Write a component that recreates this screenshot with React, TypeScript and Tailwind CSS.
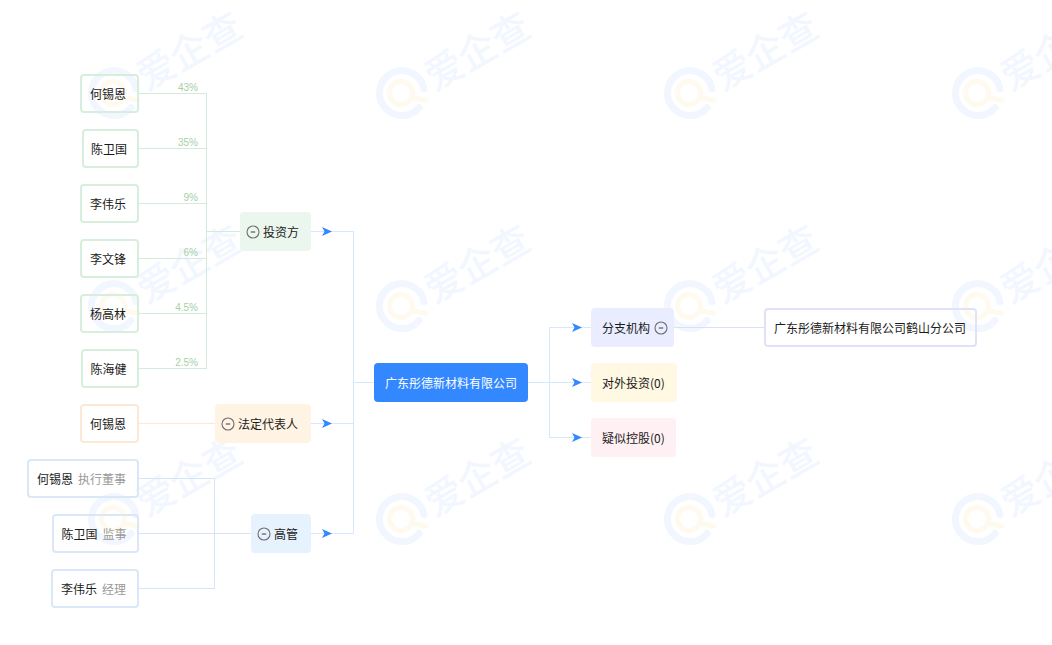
const cjk = "font-['Noto_Sans_CJK_SC','Liberation_Sans',sans-serif]";

const investors = [
  { name: "何锡恩", box: "left-[80px] top-[74px] w-[59px]" },
  { name: "陈卫国", box: "left-[82px] top-[129px] w-[57px]" },
  { name: "李伟乐", box: "left-[80px] top-[184px] w-[59px]" },
  { name: "李文锋", box: "left-[80px] top-[239px] w-[59px]" },
  { name: "杨高林", box: "left-[80px] top-[294px] w-[59px]" },
  { name: "陈海健", box: "left-[81px] top-[349px] w-[58px]" },
];

const shares = [
  { label: "43%", pos: "top-[82px]" },
  { label: "35%", pos: "top-[137px]" },
  { label: "9%", pos: "top-[192px]" },
  { label: "6%", pos: "top-[247px]" },
  { label: "4.5%", pos: "top-[302px]" },
  { label: "2.5%", pos: "top-[357px]" },
];

const managers = [
  { name: "何锡恩", role: "执行董事", box: "left-[27px] top-[459px] w-[112px]" },
  { name: "陈卫国", role: "监事", box: "left-[52px] top-[514px] w-[87px]" },
  { name: "李伟乐", role: "经理", box: "left-[51px] top-[569px] w-[88px]" },
];

function Collapse() {
  return (
    <svg width="14" height="14" viewBox="0 0 14 14" className="shrink-0">
      <circle cx="7" cy="7" r="6" fill="none" stroke="#6f6f6f" strokeWidth="1.1" />
      <path d="M4.8 7h4.4" stroke="#6f6f6f" strokeWidth="1.4" />
    </svg>
  );
}

function Watermark() {
  return (
    <div className="relative h-[213px] w-[288px]">
      <svg width="56" height="56" viewBox="0 0 56 56" className="absolute left-[86px] top-[65px]">
        <path d="M39 33l13 2" stroke="#fffaef" strokeWidth="5" strokeLinecap="round" />
        <circle cx="27" cy="28" r="11.500" fill="none" stroke="#fffaef" strokeWidth="5" />
        <path d="M50 23.700A22.500 22.500 0 1 0 45.200 42.500" fill="none" stroke="#f1f6ff" strokeWidth="7" strokeLinecap="round" />
      </svg>
      <span className="absolute left-[131px] top-[25px] -rotate-30 whitespace-nowrap text-[38px] leading-[48px] font-medium text-[#f2f7ff]">
        爱企查
      </span>
    </div>
  );
}

function Arrow({ x, y }: { x: number; y: number }) {
  return <path d={`M${x} ${y - 4.500}L${x + 10} ${y}L${x} ${y + 4.500}L${x + 2.500} ${y}Z`} fill="#3388ff" />;
}

export default function App() {
  return (
    <div className={`relative h-[645px] w-[1052px] overflow-hidden bg-white text-[12px] text-[#1a1a1a] ${cjk}`}>
      {/* watermark tiles */}
      <div className="absolute inset-0 grid grid-cols-[repeat(4,288px)] grid-rows-[repeat(3,213px)]">
        {Array.from({ length: 12 }).map((_, i) => (
          <Watermark key={i} />
        ))}
      </div>

      {/* connectors */}
      <svg width="1052" height="645" className="absolute inset-0" fill="none" shapeRendering="crispEdges">
        <path d="M139 93.500H206.500V368.500H139M139 148.500H206.500M139 203.500H206.500M139 258.500H206.500M139 313.500H206.500M206.500 231.500H241" stroke="#d3ebd9" />
        <path d="M139 423.500H216" stroke="#fbe8d6" />
        <path d="M139 478.500H214.500V588.500H139M139 533.500H252" stroke="#d5e4f6" />
        <path d="M311 231.500H353.500V533.500H311M311 423.500H353.500M353.500 382.500H375" stroke="#d6e8ff" />
        <path d="M527 382.500H592M591 327.500H549.500V437.500H592" stroke="#d6e8ff" />
        <path d="M673 327.500H765" stroke="#dcdff5" />
      </svg>
      <svg width="1052" height="645" className="absolute inset-0">
        <Arrow x={322} y={231.500} />
        <Arrow x={322} y={423.500} />
        <Arrow x={322} y={533.500} />
        <Arrow x={572} y={327.500} />
        <Arrow x={572} y={382.500} />
        <Arrow x={572} y={437.500} />
      </svg>

      {/* investors */}
      {investors.map((p) => (
        <div key={p.box} className={`absolute flex h-[39px] items-center justify-center rounded border-2 border-[#d8eedd] pr-[3px] ${p.box}`}>
          {p.name}
        </div>
      ))}
      {shares.map((s) => (
        <span key={s.label} className={`absolute right-[854px] text-[10px] leading-[12px] text-[#a6d0a4] font-['Liberation_Sans',sans-serif] ${s.pos}`}>
          {s.label}
        </span>
      ))}
      <div className="absolute left-[240px] top-[212px] flex h-[39px] w-[71px] items-center gap-[3px] rounded bg-[#ebf6ee] pl-1.5">
        <Collapse />
        投资方
      </div>

      {/* legal representative */}
      <div className="absolute left-[80px] top-[404px] flex h-[39px] w-[59px] items-center justify-center rounded border-2 border-[#fbe8d6] pr-[3px]">
        何锡恩
      </div>
      <div className="absolute left-[215px] top-[404px] flex h-[39px] w-[96px] items-center gap-[3px] rounded bg-[#fff3e3] pl-1.5">
        <Collapse />
        法定代表人
      </div>

      {/* managers */}
      {managers.map((m) => (
        <div key={m.box} className={`absolute flex h-[39px] items-center justify-center gap-[5px] rounded border-2 border-[#d9e7f8] pr-[3px] ${m.box}`}>
          <span>{m.name}</span>
          <span className="text-[#999999]">{m.role}</span>
        </div>
      ))}
      <div className="absolute left-[251px] top-[514px] flex h-[39px] w-[60px] items-center gap-[3px] rounded bg-[#e7f2ff] pl-1.5">
        <Collapse />
        高管
      </div>

      {/* company */}
      <div className="absolute left-[374px] top-[363px] flex h-[39px] w-[154px] items-center justify-center rounded bg-[#3388ff] text-white">
        广东彤德新材料有限公司
      </div>

      {/* right branches */}
      <div className="absolute left-[591px] top-[308px] flex h-[39px] w-[83px] items-center gap-1 rounded bg-[#e9edff] pl-[11px]">
        分支机构
        <Collapse />
      </div>
      <div className="absolute left-[591px] top-[363px] flex h-[39px] w-[86px] items-center rounded bg-[#fff8e3] pl-[11px]">
        对外投资(0)
      </div>
      <div className="absolute left-[591px] top-[418px] flex h-[39px] w-[85px] items-center rounded bg-[#fff0f3] pl-[11px]">
        疑似控股(0)
      </div>
      <div className="absolute left-[764px] top-[308px] flex h-[39px] w-[213px] items-center justify-center rounded border-2 border-[#dfe2f9] pr-px">
        广东彤德新材料有限公司鹤山分公司
      </div>
    </div>
  );
}
